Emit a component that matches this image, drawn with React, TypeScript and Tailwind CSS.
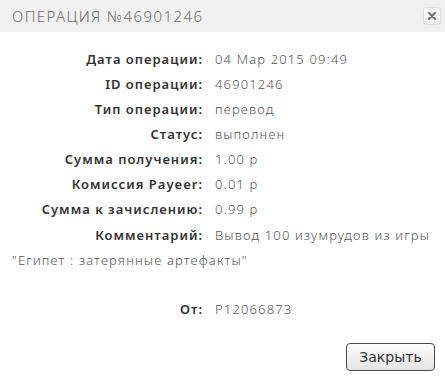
import React from 'react';

interface Row {
  label: string;
  value: string;
}

const rows: Row[] = [
  { label: 'Дата операции:', value: '04 Мар 2015 09:49' },
  { label: 'ID операции:', value: '46901246' },
  { label: 'Тип операции:', value: 'перевод' },
  { label: 'Статус:', value: 'выполнен' },
  { label: 'Сумма получения:', value: '1.00 р' },
  { label: 'Комиссия Payeer:', value: '0.01 р' },
  { label: 'Сумма к зачислению:', value: '0.99 р' },
];

const labelCls = 'inline-block w-[191px] text-right font-semibold text-[#333] tracking-[1px]';
const valueCls = 'ml-3 text-[#555] font-light tracking-[1.15px]';

export default function App() {
  return (
    <div className="w-[445px] h-[378px] bg-white flex flex-col" style={{ fontFamily: '"Noto Sans", "Open Sans", sans-serif' }}>
      <div className="h-8 bg-[#f0f0f0] flex items-center justify-between pl-3 pr-1">
        <span className="text-[15px] text-[#6e6e6e] tracking-[1.4px] font-light">ОПЕРАЦИЯ №46901246</span>
        <button className="w-[18px] h-[18px] border border-[#dcdcdc] rounded-[3px] bg-[#f6f6f6] flex items-center justify-center">
          <svg width="10" height="10" viewBox="0 0 10 10">
            <path d="M2 2 L8 8 M8 2 L2 8" stroke="#777" strokeWidth="2.4" strokeLinecap="round" />
          </svg>
        </button>
      </div>

      <div className="px-3 pt-[15px] text-[13px] leading-[25px]">
        {rows.map((r) => (
          <div key={r.label}>
            <span className={labelCls}>{r.label}</span>
            <span className={valueCls}>{r.value}</span>
          </div>
        ))}
        <div className="mt-[1px]">
          <span className={labelCls}>Комментарий:</span>
          <span className={valueCls}>
            Вывод 100 изумрудов из игры "Египет : затерянные артефакты"
          </span>
        </div>
        <div className="mt-[24px]">
          <span className={labelCls}>От:</span>
          <span className={valueCls}>P12066873</span>
        </div>
      </div>

      <div className="flex justify-end pr-[10px] mt-auto mb-[7px]">
        <button
          className="w-[89px] h-[28px] border border-[#4a4a4a] rounded-[4px] bg-gradient-to-b from-[#fdfdfd] to-[#e4e4e4] text-[14px] text-[#333]"
          style={{ fontFamily: '"DejaVu Sans", Verdana, sans-serif' }}
        >
          Закрыть
        </button>
      </div>
    </div>
  );
}
